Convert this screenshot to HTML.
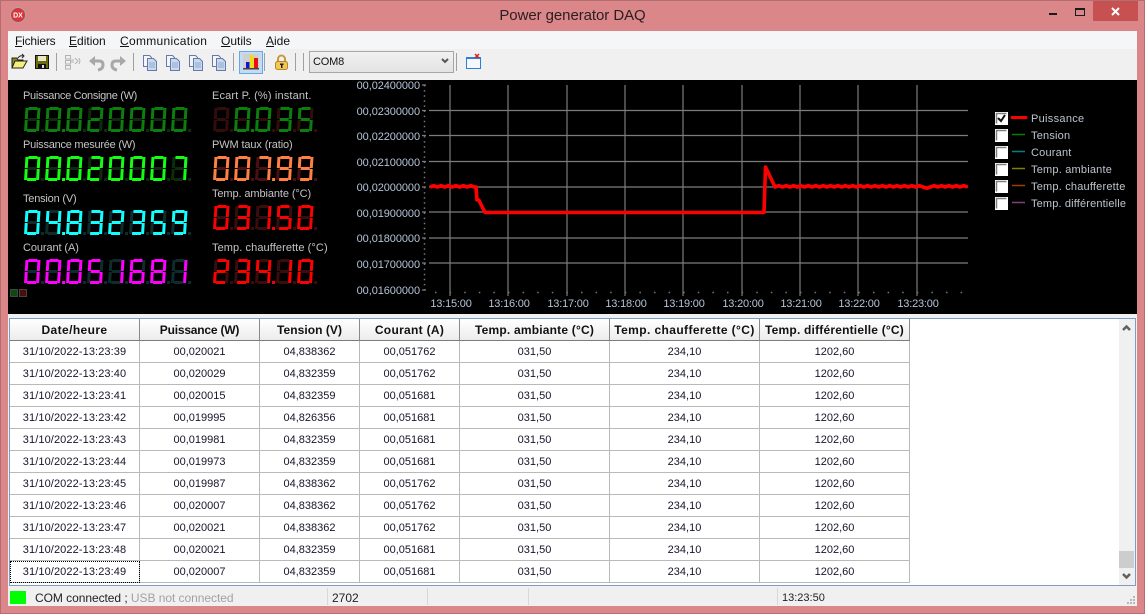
<!DOCTYPE html>
<html lang="fr"><head><meta charset="utf-8"><title>Power generator DAQ</title>
<style>
html,body{margin:0;padding:0}
body{width:1145px;height:614px;overflow:hidden;position:relative;background:#db8689;font-family:"Liberation Sans",sans-serif;font-size:11px;color:#111}
.abs,.abs>*{position:absolute}
#frame{left:0;top:0;width:1143px;height:612px;border:1px solid #b26e71}
#title{left:0;width:1145px;top:7px;text-align:center;font-size:15px;line-height:18px;color:#2a2020;letter-spacing:-.07px}
#close{left:1093px;top:1px;width:45px;height:20px;background:#c75050}
#menu{left:8px;top:31px;width:1129px;height:18px;background:#f5f6f8}
#menu span{position:absolute;top:3px;font-size:12px;line-height:14px;color:#111}
#tool{left:8px;top:49px;width:1129px;height:31px;background:#f0f0f0}
#black{left:8px;top:80px;width:1129px;height:234px;background:#000}
#white{left:8px;top:314px;width:1129px;height:292px;background:#f0f0f0}
#hi{left:239px;top:51px;width:22px;height:21px;background:#c4dcf3;border:1px solid #66a7e8}
#combo{left:309px;top:51px;width:143px;height:20px;border:1px solid #a6a6a6;background:linear-gradient(#f1f1f1,#e3e3e3);font-size:11px;line-height:20px;color:#111;text-indent:3px;letter-spacing:-.2px}
.lb{color:#c4c4c4;font-size:11px;line-height:13px;white-space:nowrap}
.lcd{display:flex;gap:6px;height:25px}
.lcd b{display:block;position:relative;width:15px;height:25px;color:transparent;font-size:1px;font-weight:400;overflow:visible;transform-origin:0 100%;transform:skewX(-3.5deg);
--a:var(--off);--b:var(--off);--c:var(--off);--d:var(--off);--e:var(--off);--f:var(--off);--g:var(--off);
background:
linear-gradient(var(--a),var(--a)) 3px 0/9px 3px no-repeat,
linear-gradient(var(--d),var(--d)) 3px 22px/9px 3px no-repeat,
linear-gradient(var(--g),var(--g)) 3px 11px/9px 3px no-repeat,
linear-gradient(var(--b),var(--b)) 12px 1px/3px 11px no-repeat,
linear-gradient(var(--c),var(--c)) 12px 13px/3px 11px no-repeat,
linear-gradient(var(--e),var(--e)) 0 13px/3px 11px no-repeat,
linear-gradient(var(--f),var(--f)) 0 1px/3px 11px no-repeat}
.lcd b::after{content:"";position:absolute;left:17px;bottom:0;width:3px;height:3px;background:var(--off)}
.lcd b.p::after{background:var(--on)}
.n0{--a:var(--on)!important;--b:var(--on)!important;--c:var(--on)!important;--d:var(--on)!important;--e:var(--on)!important;--f:var(--on)!important}
.n1{--b:var(--on)!important;--c:var(--on)!important}
.n2{--a:var(--on)!important;--b:var(--on)!important;--g:var(--on)!important;--e:var(--on)!important;--d:var(--on)!important}
.n3{--a:var(--on)!important;--b:var(--on)!important;--g:var(--on)!important;--c:var(--on)!important;--d:var(--on)!important}
.n4{--f:var(--on)!important;--g:var(--on)!important;--b:var(--on)!important;--c:var(--on)!important}
.n5{--a:var(--on)!important;--f:var(--on)!important;--g:var(--on)!important;--c:var(--on)!important;--d:var(--on)!important}
.n6{--a:var(--on)!important;--f:var(--on)!important;--g:var(--on)!important;--c:var(--on)!important;--d:var(--on)!important;--e:var(--on)!important}
.n7{--a:var(--on)!important;--b:var(--on)!important;--c:var(--on)!important}
.n8{--a:var(--on)!important;--b:var(--on)!important;--c:var(--on)!important;--d:var(--on)!important;--e:var(--on)!important;--f:var(--on)!important;--g:var(--on)!important}
.n9{--a:var(--on)!important;--b:var(--on)!important;--c:var(--on)!important;--d:var(--on)!important;--f:var(--on)!important;--g:var(--on)!important}
#tb{left:9px;top:318px;width:1125px;height:266px;border:1px solid #7d9ec0;background:#fff;overflow:hidden}
table{position:absolute;left:0;top:0;border-collapse:separate;border-spacing:0;table-layout:fixed;width:900px;font-size:11px}
th,td{box-sizing:border-box;height:22px;padding:0;text-align:center;border-right:1px solid #b9b9b9;border-bottom:1px solid #b9b9b9;color:#15152a}
th{height:22px;font-weight:700;font-size:12px;letter-spacing:.2px;color:#111;background:linear-gradient(#fff,#ececec);border-right-color:#8a8a8a;border-bottom-color:#7c7c7c}
td:first-child{letter-spacing:.1px}
td.f{outline:1px dotted #000;outline-offset:-1px}
#sb{left:1119px;top:319px;width:16px;height:266px;background:#f0f0f0}
#th{left:1119px;top:551px;width:15px;height:17px;background:#cdcdcd}
.sep{width:1px;height:17px;background:#d8d8d8;top:588px}
.st{top:591px;font-size:12px;line-height:14px;white-space:nowrap}
</style></head><body>
<div class="abs" style="left:0;top:0;width:1145px;height:614px">
<div id="frame"></div>
<div id="title">Power generator DAQ</div>
<div id="close"></div>
<div id="menu">
<span style="left:7px;letter-spacing:-.2px"><u>F</u>ichiers</span><span style="left:61px"><u>E</u>dition</span><span style="left:112px;letter-spacing:.3px"><u>C</u>ommunication</span><span style="left:213px"><u>O</u>utils</span><span style="left:258px"><u>A</u>ide</span>
</div>
<div id="tool"></div>
<div id="black"></div>
<div id="white"></div>
<div id="hi"></div>
<div id="combo">COM8</div>

<div class="lb" style="left:23px;top:90px;letter-spacing:-.32px">Puissance Consigne (W)</div>
<div class="lb" style="left:212px;top:90px;letter-spacing:.15px">Ecart P. (%) instant.</div>
<div class="lb" style="left:23px;top:139px;letter-spacing:-.24px">Puissance mesurée (W)</div>
<div class="lb" style="left:212px;top:139px;letter-spacing:-.12px">PWM taux (ratio)</div>
<div class="lb" style="left:23px;top:193px;letter-spacing:-.2px">Tension (V)</div>
<div class="lb" style="left:212px;top:188px;letter-spacing:-.1px">Temp. ambiante (°C)</div>
<div class="lb" style="left:23px;top:242px;letter-spacing:-.1px">Courant (A)</div>
<div class="lb" style="left:212px;top:242px;letter-spacing:.09px">Temp. chaufferette (°C)</div>

<div class="lcd" style="left:24px;top:107px;--on:#0b7f0b;--off:#0d2b0d"><b class="n0">0</b><b class="n0 p">0</b><b class="n0">0</b><b class="n2">2</b><b class="n0">0</b><b class="n0">0</b><b class="n0">0</b><b class="n0">0</b></div>
<div class="lcd" style="left:24px;top:156px;--on:#12ff12;--off:#0c2c0c"><b class="n0">0</b><b class="n0 p">0</b><b class="n0">0</b><b class="n2">2</b><b class="n0">0</b><b class="n0">0</b><b class="n0">0</b><b class="n7">7</b></div>
<div class="lcd" style="left:24px;top:210px;--on:#12ffff;--off:#0d2c2c"><b class="n0">0</b><b class="n4 p">4</b><b class="n8">8</b><b class="n3">3</b><b class="n2">2</b><b class="n3">3</b><b class="n5">5</b><b class="n9">9</b></div>
<div class="lcd" style="left:24px;top:259px;--on:#ff00ff;--off:#0d2c2c"><b class="n0">0</b><b class="n0 p">0</b><b class="n0">0</b><b class="n5">5</b><b class="n1">1</b><b class="n6">6</b><b class="n8">8</b><b class="n1">1</b></div>

<div class="lcd" style="left:213px;top:107px;--on:#0b7f0b;--off:#330c0c"><b></b><b class="n0 p">0</b><b class="n0">0</b><b class="n3">3</b><b class="n5">5</b></div>
<div class="lcd" style="left:213px;top:156px;--on:#ff8040;--off:#4a1010"><b class="n0">0</b><b class="n0">0</b><b class="n7 p">7</b><b class="n9">9</b><b class="n9">9</b></div>
<div class="lcd" style="left:213px;top:205px;--on:#ff0000;--off:#3a0c0c"><b class="n0">0</b><b class="n3">3</b><b class="n1 p">1</b><b class="n5">5</b><b class="n0">0</b></div>
<div class="lcd" style="left:213px;top:259px;--on:#ff0000;--off:#3a0c0c"><b class="n2">2</b><b class="n3">3</b><b class="n4 p">4</b><b class="n1">1</b><b class="n0">0</b></div>

<div style="left:10px;top:289px;width:6px;height:6px;border:1px solid #444;background:#0c4a0c"></div>
<div style="left:19px;top:289px;width:6px;height:6px;border:1px solid #444;background:#4a0c0c"></div>

<div id="tb">
<table><colgroup><col style="width:130px"><col style="width:120px"><col style="width:100px"><col style="width:100px"><col style="width:150px"><col style="width:150px"><col style="width:150px"></colgroup>
<tr><th style="letter-spacing:.4px">Date/heure</th><th style="letter-spacing:-.2px">Puissance (W)</th><th style="letter-spacing:.05px">Tension (V)</th><th style="letter-spacing:.3px">Courant (A)</th><th>Temp. ambiante (°C)</th><th style="letter-spacing:.4px">Temp. chaufferette (°C)</th><th>Temp. différentielle (°C)</th></tr>
<tr><td>31/10/2022-13:23:39</td><td>00,020021</td><td>04,838362</td><td>00,051762</td><td>031,50</td><td>234,10</td><td>1202,60</td></tr>
<tr><td>31/10/2022-13:23:40</td><td>00,020029</td><td>04,832359</td><td>00,051762</td><td>031,50</td><td>234,10</td><td>1202,60</td></tr>
<tr><td>31/10/2022-13:23:41</td><td>00,020015</td><td>04,832359</td><td>00,051681</td><td>031,50</td><td>234,10</td><td>1202,60</td></tr>
<tr><td>31/10/2022-13:23:42</td><td>00,019995</td><td>04,826356</td><td>00,051681</td><td>031,50</td><td>234,10</td><td>1202,60</td></tr>
<tr><td>31/10/2022-13:23:43</td><td>00,019981</td><td>04,832359</td><td>00,051681</td><td>031,50</td><td>234,10</td><td>1202,60</td></tr>
<tr><td>31/10/2022-13:23:44</td><td>00,019973</td><td>04,832359</td><td>00,051681</td><td>031,50</td><td>234,10</td><td>1202,60</td></tr>
<tr><td>31/10/2022-13:23:45</td><td>00,019987</td><td>04,838362</td><td>00,051762</td><td>031,50</td><td>234,10</td><td>1202,60</td></tr>
<tr><td>31/10/2022-13:23:46</td><td>00,020007</td><td>04,838362</td><td>00,051762</td><td>031,50</td><td>234,10</td><td>1202,60</td></tr>
<tr><td>31/10/2022-13:23:47</td><td>00,020021</td><td>04,838362</td><td>00,051762</td><td>031,50</td><td>234,10</td><td>1202,60</td></tr>
<tr><td>31/10/2022-13:23:48</td><td>00,020021</td><td>04,832359</td><td>00,051681</td><td>031,50</td><td>234,10</td><td>1202,60</td></tr>
<tr><td class="f">31/10/2022-13:23:49</td><td>00,020007</td><td>04,832359</td><td>00,051681</td><td>031,50</td><td>234,10</td><td>1202,60</td></tr>
</table></div>
<div id="sb"></div><div id="th"></div>

<div style="left:10px;top:591px;width:16px;height:13px;background:#00ff00"></div>
<div class="st" style="left:35px;color:#222;letter-spacing:-.05px">COM connected ; <span style="color:#a2a2a2">USB not connected</span></div>
<div class="sep" style="left:327px"></div><div class="st" style="left:332px;color:#222">2702</div>
<div class="sep" style="left:427px"></div><div class="sep" style="left:528px"></div><div class="sep" style="left:777px"></div>
<div class="st" style="left:782px;color:#222;font-size:11px">13:23:50</div>

<svg width="1145" height="614" viewBox="0 0 1145 614" style="left:0;top:0" font-family="Liberation Sans" font-size="11">
<!-- app icon -->
<circle cx="18" cy="15" r="7.5" fill="#d8343a" stroke="#a8a8a8"/><text x="18" y="17.500" font-size="7" font-weight="700" fill="#fff" text-anchor="middle">DX</text>
<!-- window controls -->
<rect x="1049" y="13" width="8" height="2" fill="#1a1a1a"/>
<rect x="1075.500" y="8.500" width="9" height="7" fill="none" stroke="#1a1a1a"/><rect x="1075" y="8" width="10" height="2" fill="#1a1a1a"/>
<path d="M1112 8l7 7M1119 8l-7 7" stroke="#fff" stroke-width="2"/>
<!-- toolbar -->
<g fill="#a0a0a0"><rect x="56" y="53" width="1" height="18"/><rect x="133" y="53" width="1" height="18"/><rect x="233" y="53" width="1" height="18"/><rect x="264" y="53" width="1" height="18"/><rect x="295" y="53" width="1" height="18"/><rect x="303" y="53" width="1" height="18"/><rect x="456" y="53" width="1" height="18"/></g>
<path d="M12 58h5l1 2h5v7H12z" fill="#8a8a20" stroke="#222"/><path d="M12 68l3-7h12l-4 7z" fill="#f5ee7a" stroke="#222"/><path d="M18 58q2-3 5-2m-1-2l2 2-2 2" fill="none" stroke="#222"/>
<rect x="35.500" y="55.500" width="13" height="13" fill="#6a6a10" stroke="#111"/><rect x="38" y="56" width="8" height="5" fill="#e8e8c8"/><rect x="38" y="64" width="8" height="5" fill="#111"/><rect x="42" y="65" width="2" height="3" fill="#ddd"/>
<g fill="none" stroke="#b2b2b2"><rect x="65.500" y="55.500" width="5" height="3.500"/><rect x="65.500" y="60.500" width="5" height="3.500"/><rect x="65.500" y="65.500" width="5" height="3.500"/><path d="M71 60h3m0 2h-3M75 58l3 3-3 3M79 58l1 3-1 3"/></g>
<path d="M94 61h5q4 0 4 4t-5 5" fill="none" stroke="#a8a8a8" stroke-width="3"/><path d="M89 61l6-5v10z" fill="#a8a8a8"/>
<path d="M121 61h-5q-4 0-4 4t5 5" fill="none" stroke="#a8a8a8" stroke-width="3"/><path d="M126 61l-6-5v10z" fill="#a8a8a8"/>
<defs><g id="cp"><path d="M.5.500h6l2 2v9h-8z" fill="#f2f6fb" stroke="#6878a8"/><path d="M4.500 3.500h6l3 3v9h-9z" fill="#c8daf0" stroke="#6878a8"/><path d="M6 8h6M6 10h6M6 12h6" stroke="#8fa8cc"/></g>
<g id="cb"><rect width="13" height="13" fill="#fff"/><path d="M1.500 11.500V1.500H11.500" fill="none" stroke="#808080" stroke-width="1.500"/></g></defs>
<use href="#cp" x="143" y="55"/><use href="#cp" x="166" y="55"/><use href="#cp" x="189" y="55"/><use href="#cp" x="212" y="55"/>
<rect x="243" y="54" width="16" height="16" fill="#cfcfcf"/><rect x="246" y="62" width="3.500" height="6" fill="#1414d0"/><rect x="250" y="55" width="3.500" height="13" fill="#f0e000"/><rect x="254" y="58" width="4" height="10" fill="#e81010"/><rect x="243" y="68" width="16" height="1.500" fill="#444"/>
<path d="M278 62v-3a3.500 3.500 0 017 0v3" fill="none" stroke="#c89a3a" stroke-width="2"/><rect x="275.500" y="61.500" width="12" height="8" rx="2" fill="#f4c850" stroke="#b8862a"/><rect x="281" y="64" width="1.500" height="4" fill="#222"/><rect x="280" y="63.500" width="3.500" height="1.500" fill="#222"/>
<path d="M442 59l3 3 3-3" fill="none" stroke="#555" stroke-width="2"/>
<rect x="466.500" y="57.500" width="14" height="11" fill="#f4f8fc" stroke="#2a80d8"/><rect x="466" y="57" width="15" height="2" fill="#2a80d8"/><path d="M475 54l4 4m0-4l-4 4" stroke="#e02020" stroke-width="1.500"/>
<!-- chart grid -->
<g stroke="#7c7c7c" stroke-width="1.200" fill="none">
<path d="M429 110.500H968M429 135.500H968M429 161.500H968M429 187H968M429 212H968M429 238H968M429 263H968"/>
<path d="M450 85V296M508 85V296M567 85V296M625 85V296M683 85V296M742 85V296M800 85V296M858 85V296M917 85V296"/>
<path d="M422 85H426M422 110.500H426M422 135.500H426M422 161.500H426M422 187H426M422 212H426M422 238H426M422 263H426M422 290H426"/>
</g>
<path d="M424.500 85V290" stroke="#777" stroke-width="1.500" stroke-dasharray="1.500 3.600"/>
<path d="M435 292.500H966" stroke="#777" stroke-width="1.500" stroke-dasharray="1.500 13.100"/>
<g fill="#b4c4d8" text-anchor="end" letter-spacing="-.08">
<text x="420" y="89">00,02400000</text><text x="420" y="115">00,02300000</text><text x="420" y="140">00,02200000</text><text x="420" y="166">00,02100000</text><text x="420" y="191">00,02000000</text><text x="420" y="217">00,01900000</text><text x="420" y="242">00,01800000</text><text x="420" y="268">00,01700000</text><text x="420" y="294">00,01600000</text>
</g>
<g fill="#b4c4d8" text-anchor="middle" letter-spacing="-.2">
<text x="451" y="307">13:15:00</text><text x="509" y="307">13:16:00</text><text x="568" y="307">13:17:00</text><text x="626" y="307">13:18:00</text><text x="684" y="307">13:19:00</text><text x="743" y="307">13:20:00</text><text x="801" y="307">13:21:00</text><text x="859" y="307">13:22:00</text><text x="918" y="307">13:23:00</text>
</g>
<path d="M430 187l3.700-1.300 3.700 1.300 3.700-1.300 3.700 1.300 3.700-1.300 3.700 1.300 3.700-1.300 3.700 1.300 3.700-1.300 3.700 1.300 3.700-1.300 3.700 1.300 1.600 0 1 13 1-.500 1 1 6 12H764L765.500 167 775 187l3.700-1.300 3.700 1.300 3.700-1.300 3.700 1.300 3.700-1.300 3.700 1.300 3.700-1.300 3.700 1.300 3.700-1.300 3.700 1.300 3.700-1.300 3.700 1.300 3.700-1.300 3.700 1.300 3.700-1.300 3.700 1.300 3.700-1.300 3.700 1.300 3.700-1.300 3.700 1.300 3.700-1.300 3.700 1.300 3.700-1.300 3.700 1.300 3.700-1.300 3.700 1.300 3.700-1.300 3.700 1.300 3.700-1.300 3.700 1.300 3.700-1.300 3.700 1.300 3.700-1.300 3.700 1.300 3.700-1.300 3.700 1.300 3.700-1.300 3.700 1.300 3.700-1.300 3.700 1.300 3.700 1.200 3.700-1.200 3.700-1.300 3.700 1.300 3.700-1.300 3.700 1.300 3.700-1.300 3.700 1.300 3.700-1.300 3.700 1.300 3.700-1.300 3.700 1.300" fill="none" stroke="#f00" stroke-width="3.600" stroke-linejoin="round"/>
<!-- legend -->
<use href="#cb" x="995" y="112"/><use href="#cb" x="995" y="129"/><use href="#cb" x="995" y="146"/><use href="#cb" x="995" y="163"/><use href="#cb" x="995" y="180"/><use href="#cb" x="995" y="197"/>
<path d="M998 118l3 3 4-6" fill="none" stroke="#111" stroke-width="2"/>
<path d="M1012 117.500h14" stroke="#f00" stroke-width="3" stroke-linecap="round"/>
<path d="M1012 134.500h13" stroke="#008000" stroke-width="1.500"/><path d="M1012 151.500h13" stroke="#008080" stroke-width="1.500"/><path d="M1012 168.500h13" stroke="#808000" stroke-width="1.500"/><path d="M1012 185.500h13" stroke="#a04000" stroke-width="1.500"/><path d="M1012 202.500h13" stroke="#804080" stroke-width="1.500"/>
<g fill="#bcc4cc" letter-spacing=".2"><text x="1031" y="122" letter-spacing=".3">Puissance</text><text x="1031" y="139">Tension</text><text x="1031" y="156">Courant</text><text x="1031" y="173">Temp. ambiante</text><text x="1031" y="190">Temp. chaufferette</text><text x="1031" y="207" letter-spacing=".15">Temp. différentielle</text></g>
<!-- scrollbar arrows -->
<path d="M1123 330l3.500-3.500 3.500 3.500" fill="none" stroke="#606060" stroke-width="2.500"/>
<path d="M1123 574l3.500 3.500 3.500-3.500" fill="none" stroke="#606060" stroke-width="2.500"/>
<!-- grip -->
<g fill="#b8b8b8"><rect x="1133" y="596" width="2" height="2"/><rect x="1130" y="599" width="2" height="2"/><rect x="1133" y="599" width="2" height="2"/><rect x="1127" y="602" width="2" height="2"/><rect x="1130" y="602" width="2" height="2"/><rect x="1133" y="602" width="2" height="2"/></g>
</svg>
</div>
</body></html>
